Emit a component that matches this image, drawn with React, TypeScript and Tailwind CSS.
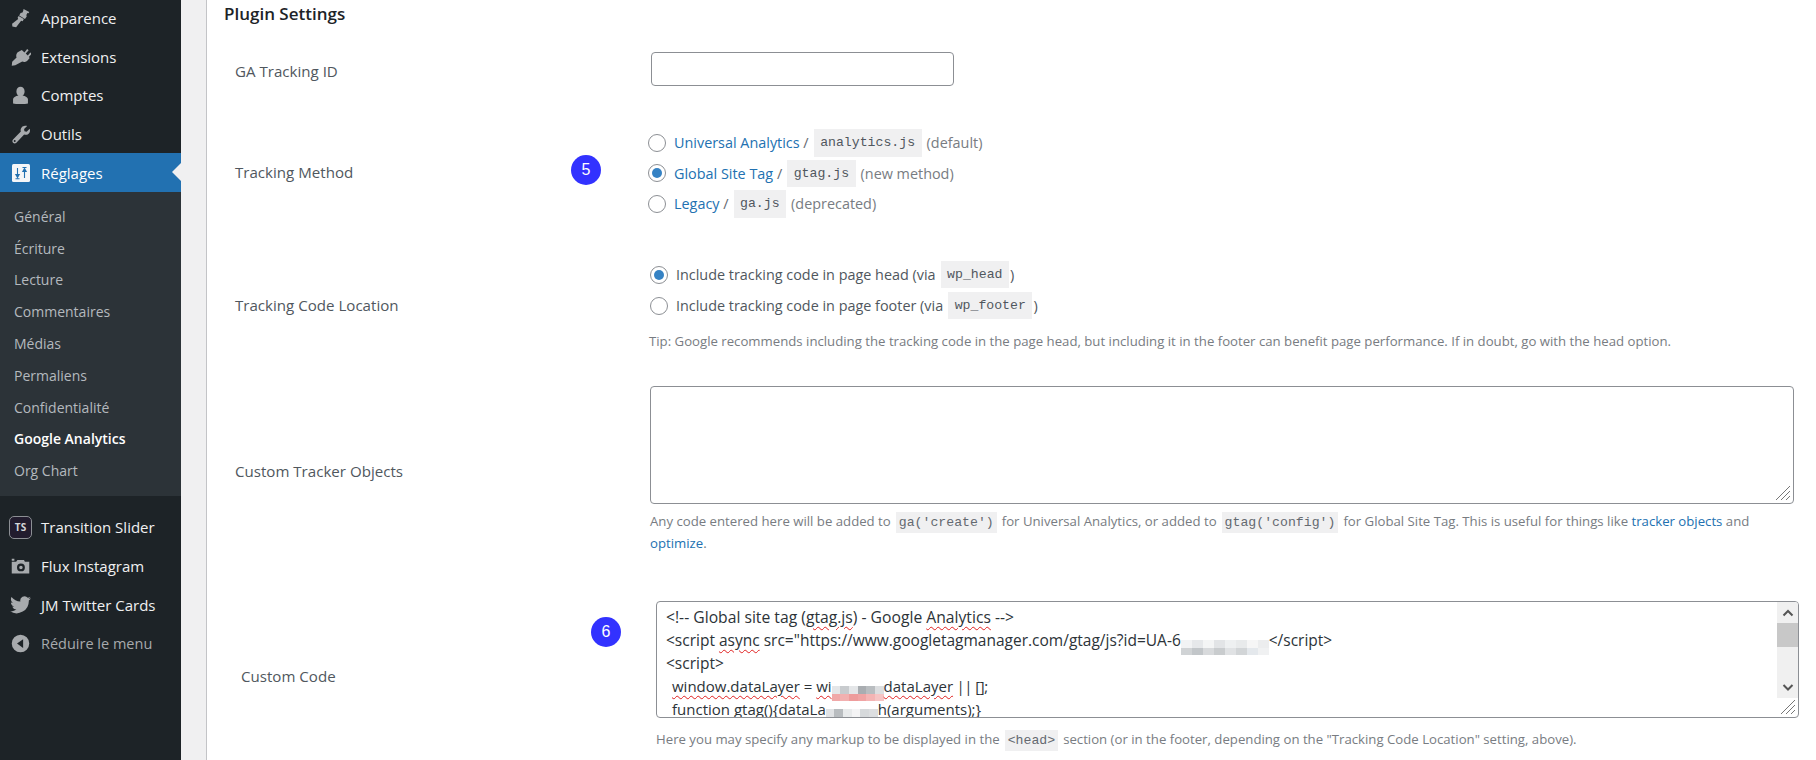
import React from 'react';

const SANS = "font-['Open_Sans','Noto_Sans',sans-serif]";

const icons: Record<string, React.ReactNode> = {
  brush: <path d="M15.500 1l6.500 3.500-.8 1.500-1.300-.4-1.200 2.400.4 1.800-2 2.800-6.600-4 1.600-3 2.200-.5.800-2.100zM9.800 9l6 3.700-1.300 2.300-1.800-.3-5.700 7.300-4.300-1-.3-2.900 7-5.400-.7-1.700z" />,
  plug: <path d="M13.500 4.500l3 2.800 3.100-3.900 1.700 1.400-3.300 3.900 2.300 2.200 3-3.500 1.500 1.400-3.300 3.800 1 1-2.500 3c-1.700 1.800-4 2.100-6 1.200L6 22l-4 .5.500-4.500 5-4.900c-.8-2-.4-4.300 1.300-6z" />,
  user: <path d="M12 2a4.700 5.300 0 0 1 4.700 5.300c0 2.100-1 3.900-2.400 4.800 3.500.7 6.200 2.200 6.200 4.200V21c-3 1-14 1-17 0v-4.700c0-2 2.700-3.500 6.200-4.200-1.400-.9-2.400-2.700-2.400-4.800A4.700 5.300 0 0 1 12 2z" />,
  wrench: <path d="M17 2c1-.2 1.900 0 2.600.3l-3.500 3.400.4 2.600 2.500.5 3.500-3.500c.8 2 .3 4.200-1.200 5.700-1.400 1.300-3.400 1.700-5.100 1.100L7.300 21.500c-1.100 1-2.800 1-3.800 0s-1-2.700 0-3.800l8.900-9.100c-.6-1.700-.2-3.700 1.100-5 .9-.9 2.300-1.500 3.500-1.600zM5.400 18.300a1.100 1.100 0 1 0 0 2.200 1.100 1.100 0 0 0 0-2.200z" fillRule="evenodd" />,
  camera: <path d="M2 3h3v2.500H2zM2 6.500h5l1.500-2h7.500l1 2h5V20H2zM12.500 8.500a4.500 4.500 0 1 0 0 9 4.500 4.500 0 0 0 0-9zM12.500 11a2 2 0 1 1 0 4 2 2 0 0 1 0-4z" fillRule="evenodd" />,
  twitter: <path d="M24 4.900c-.9.400-1.800.600-2.800.800 1-.6 1.800-1.600 2.200-2.700-1 .6-2 1-3.100 1.200a4.900 4.900 0 0 0-8.400 4.500C7.800 8.500 4.200 6.500 1.700 3.500c-1.300 2.200-.6 5.100 1.500 6.500-.8 0-1.600-.2-2.200-.6 0 2.300 1.600 4.400 3.900 4.900-.7.200-1.500.2-2.200.1.600 2 2.400 3.400 4.600 3.400A9.900 9.900 0 0 1 0 19.800a14 14 0 0 0 21.500-12.400c1-.7 1.800-1.500 2.500-2.500z" />,
  collapse: <path d="M12 2a10 10 0 1 0 0 20 10 10 0 0 0 0-20zm3 5v10l-7-5z" fillRule="evenodd" />,
};

function MenuIcon({ name, size = 21 }: { name: string; size?: number }) {
  return (
    <svg width={size} height={size} viewBox="0 0 24 24" fill="#a7aaad" className="shrink-0">
      {icons[name]}
    </svg>
  );
}

function TopItem({ icon, label }: { icon: string; label: string }) {
  return (
    <div className="h-[38.6px] flex items-center text-[15px] text-[#f0f0f1]">
      <div className="w-[41px] flex justify-center"><MenuIcon name={icon} /></div>
      <span>{label}</span>
    </div>
  );
}

const subItems = ['Général', 'Écriture', 'Lecture', 'Commentaires', 'Médias', 'Permaliens', 'Confidentialité'];

function Sidebar() {
  return (
    <aside className="w-[181px] shrink-0 h-[760px] bg-[#1d2327] flex flex-col">
      <div className="-mt-[1px]" />
      <TopItem icon="brush" label="Apparence" />
      <TopItem icon="plug" label="Extensions" />
      <TopItem icon="user" label="Comptes" />
      <TopItem icon="wrench" label="Outils" />
      {/* current section */}
      <div className="relative h-[39px] bg-[#2271b1] flex items-center text-[15px] text-white">
        <div className="w-[41px] flex justify-center">
          <svg width="18" height="18" viewBox="0 0 18 18">
            <rect width="18" height="18" rx="1.500" fill="#f4f6f8" />
            <path d="M5.500 4v8M3.800 10.500L5.500 13.500 7.200 10.500zM12.500 14V6M10.800 7.500L12.500 4.500 14.200 7.500zM3.500 14.800h4M10.500 3.500h4" stroke="#2271b1" strokeWidth="1.100" fill="#2271b1" />
          </svg>
        </div>
        <span>Réglages</span>
        <div className="absolute right-0 top-[10px] w-0 h-0 border-y-[9px] border-y-transparent border-r-[9px] border-r-[#f0f0f1]" />
      </div>
      <div className="h-[304px] bg-[#2c3338] pt-[8px] text-[14px]">
        {subItems.map((s) => (
          <div key={s} className="h-[31.8px] flex items-center pl-[14px] text-[#b4b9be]">{s}</div>
        ))}
        <div className="h-[31.8px] flex items-center pl-[14px] font-semibold text-white">Google Analytics</div>
        <div className="h-[31.8px] flex items-center pl-[14px] text-[#b4b9be]">Org Chart</div>
      </div>
      <div className="h-[12px]" />
      <div className="h-[38.6px] flex items-center text-[15px] text-[#f0f0f1]">
        <div className="w-[41px] flex justify-center">
          <div className="w-[23px] h-[23px] rounded-[5px] border border-[#8c8f94] bg-[#221c2e] flex items-center justify-center text-[10px] font-bold text-[#d5d6d8]">TS</div>
        </div>
        <span>Transition Slider</span>
      </div>
      <TopItem icon="camera" label="Flux Instagram" />
      <TopItem icon="twitter" label="JM Twitter Cards" />
      <div className="h-[38.6px] flex items-center text-[14.5px] text-[#a7aaad]">
        <div className="w-[41px] flex justify-center"><MenuIcon name="collapse" /></div>
        <span>Réduire le menu</span>
      </div>
    </aside>
  );
}

function Code({ children, help = false, tight = false }: { children: React.ReactNode; help?: boolean; tight?: boolean }) {
  if (help) {
    return (
      <code className="font-['Liberation_Mono',monospace] bg-[#f0f0f1] text-[#646970] text-[13.2px] px-[3px] py-[3px] mx-[5px]">
        {children}
      </code>
    );
  }
  return (
    <code className={`font-['Liberation_Mono',monospace] bg-[#f0f0f1] text-[#50575e] text-[13.2px] px-[6.500px] py-[4px] ml-[5px] ${tight ? 'mr-[1px]' : 'mr-[5px]'}`}>
      {children}
    </code>
  );
}

function Radio({ checked = false }: { checked?: boolean }) {
  return (
    <span className="w-[18px] h-[18px] rounded-full border border-[#8c8f94] bg-white flex items-center justify-center shrink-0 mr-[8px]">
      {checked && <span className="w-[10px] h-[10px] rounded-full bg-[#3582c4]" />}
    </span>
  );
}

function Badge({ n, className }: { n: number; className: string }) {
  return (
    <div className={`absolute w-[30px] h-[30px] rounded-full bg-[#3232ff] text-white flex items-center justify-center text-[16px] font-['Liberation_Sans',sans-serif] ${className}`}>
      {n}
    </div>
  );
}

function Label({ children, className = '' }: { children: React.ReactNode; className?: string }) {
  return <div className={`w-[415px] shrink-0 pl-[28px] text-[15.1px] text-[#50575e] ${className}`}>{children}</div>;
}

function Sq({ children }: { children: React.ReactNode }) {
  return <span className="underline decoration-wavy decoration-[#e02020] decoration-1 underline-offset-[3px]">{children}</span>;
}

// pixelated redaction patch, two rows of colour blocks
function Blur({ w, top, bottom }: { w: number; top: string[]; bottom: string[] }) {
  return (
    <span className="inline-flex flex-col h-[15px] align-[-2px]" style={{ width: w }}>
      {[top, bottom].map((row, r) => (
        <span key={r} className="flex flex-1">
          {row.map((c, i) => (
            <span key={i} className="flex-1" style={{ backgroundColor: c }} />
          ))}
        </span>
      ))}
    </span>
  );
}

function Resize() {
  return (
    <svg width="16" height="16" viewBox="0 0 16 16" stroke="#777" className="absolute right-[2px] bottom-[2px]">
      <path d="M1 15L15 1M6 15L15 6M11 15L15 11" />
    </svg>
  );
}

function Main() {
  return (
    <main className="relative flex-1 h-[760px] overflow-hidden bg-white border-l border-[#c3c4c7] text-[14.4px] ml-[25px]">
      <h2 className="h-[28px] pl-[17px] flex items-center text-[17px] font-semibold text-[#1d2327]">Plugin Settings</h2>

      {/* GA id */}
      <div className="flex items-center mt-[24px] h-[34px]">
        <Label className="pt-[5px]">GA Tracking ID</Label>
        <input className="w-[303px] h-[34px] ml-[29px] border border-[#8c8f94] rounded-[4px] bg-white" />
      </div>

      {/* method */}
      <div className="relative flex items-center mt-[41px] h-[93px]">
        <Label className="pb-[2px]">Tracking Method</Label>
        <Badge n={5} className="left-[364px] top-[28px]" />
        <div className="ml-[26px] flex flex-col">
          <div className="h-[30.8px] flex items-center text-[#646970]">
            <Radio />
            <span className="text-[#2271b1]">Universal Analytics</span>&nbsp;/<Code>analytics.js</Code><span className="text-[#787c82]">(default)</span>
          </div>
          <div className="h-[30.8px] flex items-center text-[#646970]">
            <Radio checked />
            <span className="text-[#2271b1]">Global Site Tag</span>&nbsp;/<Code>gtag.js</Code><span className="text-[#787c82]">(new method)</span>
          </div>
          <div className="h-[30.8px] flex items-center text-[#646970]">
            <Radio />
            <span className="text-[#2271b1]">Legacy</span>&nbsp;/<Code>ga.js</Code><span className="text-[#787c82]">(deprecated)</span>
          </div>
        </div>
      </div>

      {/* location */}
      <div className="flex mt-[39px]">
        <Label className="pt-[35px]">Tracking Code Location</Label>
        <div className="ml-[28px] flex flex-col text-[#50575e]">
          <div className="h-[31px] flex items-center"><Radio checked />Include tracking code in page head (via<Code tight>wp_head</Code>)</div>
          <div className="h-[31px] flex items-center"><Radio />Include tracking code in page footer (via<Code tight>wp_footer</Code>)</div>
          <p className="mt-[11px] -ml-[1px] text-[13.2px] text-[#787c82]">Tip: Google recommends including the tracking code in the page head, but including it in the footer can benefit page performance. If in doubt, go with the head option.</p>
        </div>
      </div>

      {/* tracker objects */}
      <div className="flex mt-[34px]">
        <Label className="pt-[74px]">Custom Tracker Objects</Label>
        <div className="ml-[28px] w-[1144px]">
          <div className="relative h-[118px] border border-[#8c8f94] rounded-[4px] bg-white"><Resize /></div>
          <p className="mt-[7px] text-[13.2px] leading-[21px] text-[#787c82]">
            Any code entered here will be added to<Code help>ga('create')</Code>for Universal Analytics, or added to<Code help>gtag('config')</Code>for Global Site Tag. This is useful for things like <span className="text-[#2271b1]">tracker objects</span> and <span className="text-[#2271b1]">optimize</span>.
          </p>
        </div>
      </div>

      {/* custom code */}
      <div className="relative flex mt-[47px]">
        <Label className="pt-[64px] pl-[34px]">Custom Code</Label>
        <Badge n={6} className="left-[384px] top-[16px]" />
        <div className="ml-[34px] w-[1143px]">
          <div className="relative h-[117px] border border-[#8c8f94] rounded-[4px] bg-white overflow-hidden pl-[9px] pt-[4px] text-[15.5px] leading-[23px] text-[#2c3338] whitespace-pre">
            <div className="h-[23px] text-[15.7px]">{'<!-- Global site tag ('}<Sq>gtag.js</Sq>{') - Google '}<Sq>Analytics</Sq>{' -->'}</div>
            <div className="h-[23px]">{'<script '}<Sq>async</Sq>{' src="https://www.googletagmanager.com/gtag/js?id=UA-6'}<Blur w={88} top={['#f2f3f4', '#e6e8ea', '#f4f5f5', '#e2e4e6', '#eef0f1', '#e8eaeb', '#f6f6f6', '#ecedee']} bottom={['#d0d3d5', '#c2c6c9', '#d8dadc', '#c9ccce', '#e0e2e4', '#d2d5d7', '#e4e8ec', '#f0f1f2']} />{'</script>'}</div>
            <div className="h-[23px]">{'<script>'}</div>
            <div className="h-[23px] pl-[6px] text-[15px]"><Sq>window.dataLayer</Sq>{' = '}<Sq>wi</Sq><Blur w={52} top={['#e4e6e8', '#c8cbce', '#e4e6e8', '#a9adb1', '#b9bdc0', '#dcdee0']} bottom={['#f0a8a8', '#f2b0b0', '#ee9c9c', '#f0a4a4', '#f4b4b4', '#f6c4c4']} /><Sq>dataLayer</Sq><span className="tracking-[-0.5px]">{' || [];'}</span></div>
            <div className="h-[23px] pl-[6px] text-[15px]"><Sq>function</Sq>{' '}<Sq>gtag</Sq>{'(){'}<Sq>dataLa</Sq><Blur w={52} top={['#e0e2e4', '#b8bcbf', '#e8eaeb', '#f4f4f5', '#d6d9db', '#dcdee0']} bottom={['#bcc0c3', '#b2b6ba', '#c4c8cb', '#eceeef', '#bfc3c6', '#b9bdc0']} /><Sq>h</Sq>{'(arguments);}'}</div>
            <div className="absolute right-0 top-0 w-[21px] h-[96px] bg-[#f0f0f0] flex flex-col items-center">
              <svg width="12" height="21" viewBox="0 0 12 21" fill="none" stroke="#555" strokeWidth="2"><path d="M1.500 13.500L6 9l4.500 4.500" /></svg>
              <div className="w-full h-[24px] bg-[#c8c8c8]" />
              <svg width="12" height="21" viewBox="0 0 12 21" fill="none" stroke="#555" strokeWidth="2" className="mt-auto"><path d="M1.500 8L6 12.500 10.500 8" /></svg>
            </div>
            <Resize />
          </div>
          <p className="mt-[12px] text-[13.2px] text-[#787c82]">
            Here you may specify any markup to be displayed in the<Code help>&lt;head&gt;</Code>section (or in the footer, depending on the "Tracking Code Location" setting, above).
          </p>
        </div>
      </div>
    </main>
  );
}

export default function App() {
  return (
    <div className={`flex h-[760px] w-[1816px] overflow-hidden bg-[#f0f0f1] ${SANS}`}>
      <Sidebar />
      <Main />
    </div>
  );
}
